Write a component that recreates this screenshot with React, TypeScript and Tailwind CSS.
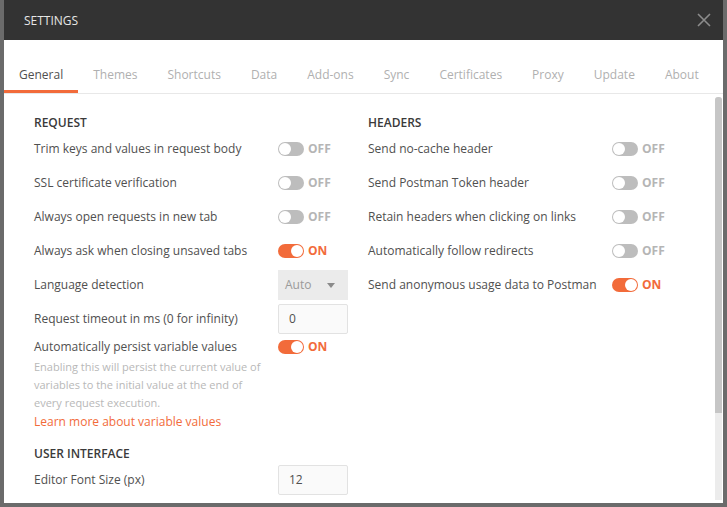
const tabs = ["General", "Themes", "Shortcuts", "Data", "Add-ons", "Sync", "Certificates", "Proxy", "Update", "About"]

const Toggle = ({ on }: { on: boolean }) => (
    <div className="flex items-center">
        <div className={`relative w-[26px] h-[14px] rounded-full ${on ? "bg-[#f26b3a]" : "bg-[#bdbdbd]"}`}>
            <div className={`absolute top-[1px] w-[12px] h-[12px] rounded-full bg-white ${on ? "right-[1px]" : "left-[1px]"}`} />
        </div>
        <span className={`ml-[4px] text-[12px] font-bold ${on ? "text-[#f26b3a]" : "text-[#b5b5b5]"}`}>{on ? "ON" : "OFF"}</span>
    </div>
)

const Row = ({ label, children }: { label: string, children: React.ReactNode }) => (
    <div className="flex items-center h-[34px]">
        <div className="w-[244px] text-[12px] text-[#505050]">{label}</div>
        {children}
    </div>
)

const Heading = ({ text }: { text: string }) => (
    <div className="h-[17px] text-[12px] font-semibold text-[#3a3a3a] leading-4">{text}</div>
)

const Box = ({ value }: { value: string }) => (
    <div className="w-[70px] h-[30px] border border-[#e2e2e2] bg-[#fafafa] rounded-[2px] flex items-center pl-[10px] text-[12px] text-[#505050]">{value}</div>
)

export default function App() {
    return (
        <div className="w-[727px] h-[507px] bg-[#6b6b6b] px-[4px] pb-[4px] overflow-hidden" style={{ fontFamily: '"Open Sans", sans-serif' }}>
            <div className="h-full bg-white flex flex-col">
                <div className="h-10 shrink-0 bg-[#333333] flex items-center justify-between pl-5 pr-[12px]">
                    <span className="text-[12px] text-[#e6e6e6] mt-[1px]">SETTINGS</span>
                    {/* close */}
                    <svg width="14" height="14" viewBox="0 0 14 14" className="text-[#8c8c8c]">
                        <path d="M1 1L13 13M13 1L1 13" stroke="currentColor" strokeWidth="1.6" />
                    </svg>
                </div>
                <div className="h-[54px] shrink-0 flex items-end border-b border-[#e8e8e8]">
                    {tabs.map((t, i) => (
                        <div key={t} className={`px-[15px] pb-[6px] text-[12px] border-b-[3px] ${i === 0 ? "border-[#f26b3a] text-[#505050]" : "border-transparent text-[#b0b0b0]"}`}>
                            {t}
                        </div>
                    ))}
                </div>
                <div className="flex-1 flex min-h-0">
                    <div className="flex-1 grid grid-cols-[334px_1fr] pl-[30px] pt-[21px]">
                        <div>
                            <Heading text="REQUEST" />
                            <Row label="Trim keys and values in request body"><Toggle on={false} /></Row>
                            <Row label="SSL certificate verification"><Toggle on={false} /></Row>
                            <Row label="Always open requests in new tab"><Toggle on={false} /></Row>
                            <Row label="Always ask when closing unsaved tabs"><Toggle on={true} /></Row>
                            <Row label="Language detection">
                                <div className="w-[70px] h-[30px] bg-[#ebebeb] flex items-center justify-between pl-[7px] pr-[13px] text-[12px] text-[#9a9a9a]">
                                    <span>Auto</span>
                                    <span className="w-0 h-0 border-l-[4px] border-r-[4px] border-t-[5px] border-l-transparent border-r-transparent border-t-[#8a8a8a]" />
                                </div>
                            </Row>
                            <Row label="Request timeout in ms (0 for infinity)"><Box value="0" /></Row>
                            <div className="flex items-center h-[22px]">
                                <div className="w-[244px] text-[12px] text-[#505050]">Automatically persist variable values</div>
                                <Toggle on={true} />
                            </div>
                            <div className="w-[232px] text-[11px] leading-[18px] text-[#b8b8b8]">
                                Enabling this will persist the current value of variables to the initial value at the end of every request execution.
                            </div>
                            <div className="mt-[1px] text-[12px] leading-[18px] text-[#f26b3a]">Learn more about variable values</div>
                            <div className="mt-[15px]">
                                <Heading text="USER INTERFACE" />
                            </div>
                            <Row label="Editor Font Size (px)"><Box value="12" /></Row>
                        </div>
                        <div>
                            <Heading text="HEADERS" />
                            <Row label="Send no-cache header"><Toggle on={false} /></Row>
                            <Row label="Send Postman Token header"><Toggle on={false} /></Row>
                            <Row label="Retain headers when clicking on links"><Toggle on={false} /></Row>
                            <Row label="Automatically follow redirects"><Toggle on={false} /></Row>
                            <Row label="Send anonymous usage data to Postman"><Toggle on={true} /></Row>
                        </div>
                    </div>
                    <div className="w-[7px] mr-[1px] mt-[3px] mb-[3px] bg-[#ececec] rounded-t-[3px] flex flex-col">
                        <div className="h-[316px] bg-[#c6c6c6] rounded-t-[3px]" />
                    </div>
                </div>
            </div>
        </div>
    )
}
